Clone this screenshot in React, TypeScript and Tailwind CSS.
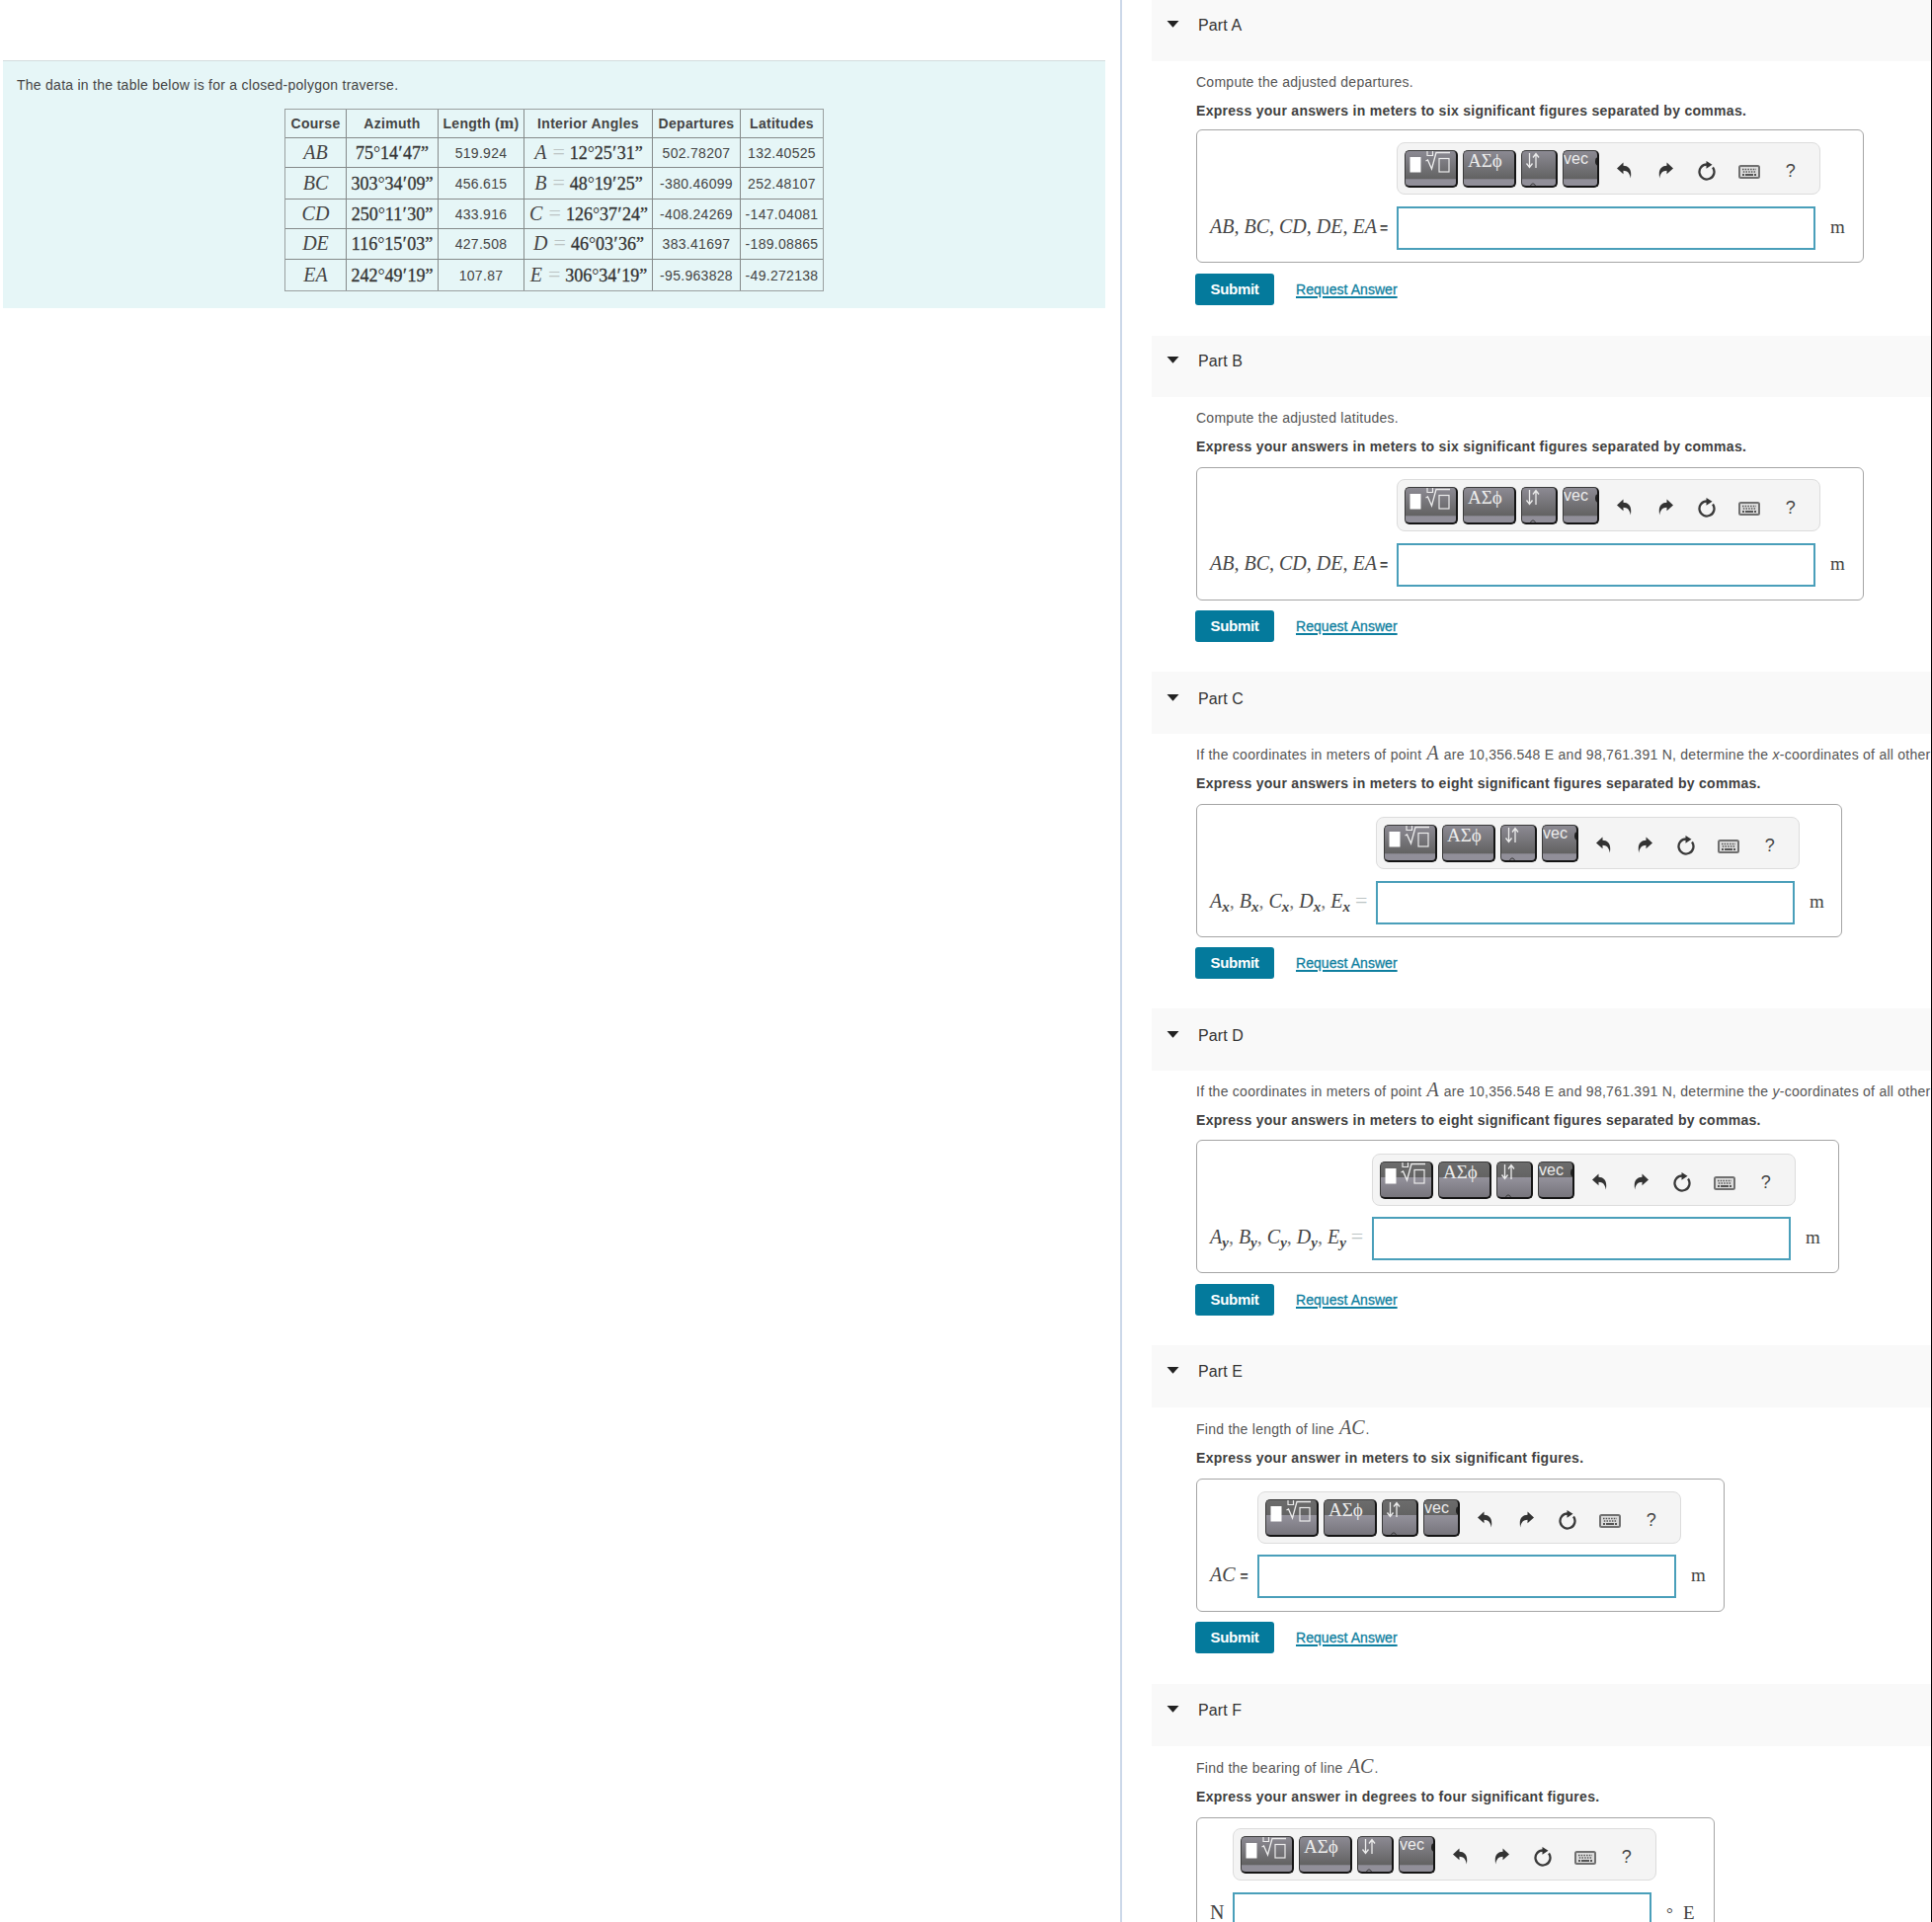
import type { ReactNode } from "react";

const rows = [
  { course: "AB", azimuth: ["75", "14", "47"], length: "519.924", angle: "A", value: ["12", "25", "31"], dep: "502.78207", lat: "132.40525", height: "h-[30px]" },
  { course: "BC", azimuth: ["303", "34", "09"], length: "456.615", angle: "B", value: ["48", "19", "25"], dep: "-380.46099", lat: "252.48107", height: "h-[32px]" },
  { course: "CD", azimuth: ["250", "11", "30"], length: "433.916", angle: "C", value: ["126", "37", "24"], dep: "-408.24269", lat: "-147.04081", height: "h-[30px]" },
  { course: "DE", azimuth: ["116", "15", "03"], length: "427.508", angle: "D", value: ["46", "03", "36"], dep: "383.41697", lat: "-189.08865", height: "h-[31px]" },
  { course: "EA", azimuth: ["242", "49", "19"], length: "107.87", angle: "E", value: ["306", "34", "19"], dep: "-95.963828", lat: "-49.272138", height: "h-[32px]" },
];

function Math({ children }: { children: ReactNode }) {
  return (
    <span className="mx-px font-['Liberation_Serif',serif] text-[20px] leading-none tracking-normal italic">
      {children}
    </span>
  );
}

function Dms({ value }: { value: string[] }) {
  return (
    <span className="font-['Liberation_Serif',serif] text-[18px] leading-none tracking-normal text-[#333] [-webkit-text-stroke:0.3px_#333]">
      {value[0]}
      <span className="inline-block w-[7px] text-center leading-none [-webkit-text-stroke:0px]">°</span>
      {value[1]}
      <span className="inline-block w-[5px]">′</span>
      {value[2]}”
    </span>
  );
}

function ThinEquals() {
  return (
    <span className="mx-[5px] font-['Liberation_Serif',serif] text-[22px] leading-none tracking-normal text-[#bcc4c4] not-italic">
      =
    </span>
  );
}

function DataTable() {
  const cell = "border border-[#858a8a] p-0";
  return (
    <table className="ml-[285px] w-[546px] table-fixed border-collapse text-center text-[14px] leading-none tracking-[0.3px] text-[#444] outline outline-1 -outline-offset-1 outline-[#9aa0a0]">
      <colgroup>
        <col className="w-[62px]" />
        <col className="w-[93px]" />
        <col className="w-[87px]" />
        <col className="w-[130px]" />
        <col className="w-[89px]" />
        <col className="w-[84px]" />
      </colgroup>
      <thead>
        <tr className="h-[29px] whitespace-nowrap">
          <th className={cell}>Course</th>
          <th className={cell}>Azimuth</th>
          <th className={cell}>
            <span className="relative -top-px">
              Length (<span className="font-['Liberation_Serif',serif] text-[17px] leading-none">m</span>)
            </span>
          </th>
          <th className={cell}>Interior Angles</th>
          <th className={cell}>Departures</th>
          <th className={cell}>Latitudes</th>
        </tr>
      </thead>
      <tbody>
        {rows.map((row) => (
          <tr key={row.course} className={`${row.height} whitespace-nowrap`}>
            <td className={`${cell} pb-[2px]`}>
              <Math>{row.course}</Math>
            </td>
            <td className={cell}>
              <Dms value={row.azimuth} />
            </td>
            <td className={cell}>{row.length}</td>
            <td className={`${cell} pb-[2px]`}>
              <Math>{row.angle}</Math>
              <ThinEquals />
              <Dms value={row.value} />
            </td>
            <td className={cell}>{row.dep}</td>
            <td className={cell}>{row.lat}</td>
          </tr>
        ))}
      </tbody>
    </table>
  );
}

function Subscripted({ sub }: { sub: string }) {
  return (
    <>
      {["A", "B", "C", "D", "E"].map((name, i) => (
        <span key={name}>
          {i > 0 && <span className="mr-[5px] text-[#777]">,</span>}
          {name}
          <span className="relative top-[4px] text-[15px] leading-none font-bold">{sub}</span>
        </span>
      ))}
      <ThinEquals />
    </>
  );
}

const glossy =
  "bg-[linear-gradient(180deg,#8c8a93_0%,#626262_80%,#918f99_82%,#918f99_100%)]";
const glossyLow =
  "bg-[linear-gradient(180deg,#6c6c6c_0%,#636363_42%,#93919b_44%,#77757c_100%)]";

function Toolbar({ low }: { low?: boolean }) {
  const button = `h-[38px] shrink-0 overflow-hidden rounded-[5px] border border-r-2 border-b-2 border-[#3a3a3a] border-r-[#151515] border-b-[#151515] text-[#ececec] ${low ? glossyLow : glossy}`;
  const slot = "flex w-[42.2px] shrink-0 items-center justify-center";
  return (
    <div className="flex h-[53px] w-[429px] items-center rounded-[8px] border border-[#dcdcdc] bg-[#f4f4f4] pl-[7px]">
      <div className="flex gap-[5px]">
        <div className={`w-[54px] ${button}`}>
          <svg width="50" height="34" viewBox="0 0 50 34" fill="none" stroke="#ececec">
            <rect x="4.5" y="6" width="11" height="15.500" fill="#fff" stroke="none" />
            <path d="M22 0v4.500h5.500V0" strokeWidth="1.200" />
            <path d="M20.500 10l2-1 4 9 4.500-16.500h14" strokeWidth="1.300" />
            <rect x="34" y="7.500" width="10" height="13.500" strokeWidth="1.200" />
          </svg>
        </div>
        <div className={`w-[54px] pl-1 font-['Liberation_Serif',serif] text-[19px] leading-[20px] ${button}`}>
          ΑΣϕ
        </div>
        <div className={`w-[37px] ${button}`}>
          <svg width="34" height="36" viewBox="0 0 34 36" fill="none" stroke="#ececec" strokeWidth="1.3">
            <path d="M7.500 2v14M4.500 12.500l3 4 3-4" />
            <path d="M14 17V3M11 6.500l3-4 3 4" />
            <path d="M8.500 36c0-4 5-4 5 0" stroke="#333" strokeWidth="1" />
          </svg>
        </div>
        <div className={`relative w-[37px] font-['Liberation_Sans',sans-serif] text-[16px] leading-[16px] ${button}`}>
          vec
          <span className="absolute top-[6px] -right-[2px] h-[9px] w-[4px] rounded-l-full bg-[#222]" />
        </div>
      </div>
      <div className="ml-[4px] flex flex-1 pt-1">
        <div className={slot}>
          <svg width="15" height="17" viewBox="0 0 15 17" fill="#333">
            <path d="M0 6.500L6.500.5v3.200C12 4 15.500 7.500 13.800 16.500 13 11 10.500 9 6.500 8.800v3.400z" />
          </svg>
        </div>
        <div className={slot}>
          <svg width="15" height="17" viewBox="0 0 15 17" fill="#333">
            <path d="M15 6.500L8.500.5v3.200C3 4-.5 7.500 1.200 16.500 2 11 4.500 9 8.500 8.800v3.400z" />
          </svg>
        </div>
        <div className={slot}>
          <svg width="20" height="20" viewBox="0 0 20 20" fill="none">
            <path d="M10 3.500a7.500 7.500 0 1 0 6 3" stroke="#3a3a3a" strokeWidth="2.300" />
            <path d="M9.500 0l6 3.800-6 4z" fill="#333" />
          </svg>
        </div>
        <div className={slot}>
          <svg width="22" height="14" viewBox="0 0 22 14" className="mt-[3px]">
            <rect x="1" y="1" width="20" height="12" rx="1.500" fill="#dcdcdc" stroke="#707070" strokeWidth="2" />
            <path d="M4 4.500h14M4.800 7h13" stroke="#555" strokeWidth="1.600" strokeDasharray="1.500 1.200" />
            <path d="M4 10h2M7 10h8M16 10h2" stroke="#555" strokeWidth="1.800" />
          </svg>
        </div>
        <div className={`${slot} text-[18px] leading-none text-[#444]`}>?</div>
      </div>
    </div>
  );
}

type Part = {
  name: string;
  section: string;
  header: string;
  prompt: ReactNode;
  promptClass: string;
  instruction: string;
  instructionClass: string;
  boxClass: string;
  label: ReactNode;
  labelClass: string;
  unit: ReactNode;
  unitClass: string;
  footClass: string;
  low?: boolean;
};

const courses = (
  <>
    AB, BC, CD, DE, EA
    <b className="ml-[3px] font-['Liberation_Sans',sans-serif] text-[14px] not-italic">=</b>
  </>
);

const parts: Part[] = [
  {
    name: "Part A",
    section: "h-[340px]",
    header: "h-[62px] pt-[1px]",
    prompt: "Compute the adjusted departures.",
    promptClass: "pt-[7px]",
    instruction: "Express your answers in meters to six significant figures separated by commas.",
    instructionClass: "h-[33px]",
    boxClass: "pb-3",
    label: courses,
    labelClass: "w-[189px]",
    unit: "m",
    unitClass: "w-12",
    footClass: "pt-[11px]",
  },
  {
    name: "Part B",
    section: "h-[340px]",
    header: "h-[62px] pt-[1px]",
    prompt: "Compute the adjusted latitudes.",
    promptClass: "pt-[7px]",
    instruction: "Express your answers in meters to six significant figures separated by commas.",
    instructionClass: "h-[35px]",
    boxClass: "pb-[13px]",
    label: courses,
    labelClass: "w-[189px]",
    unit: "m",
    unitClass: "w-12",
    footClass: "pt-[10px]",
  },
  {
    name: "Part C",
    section: "h-[341px]",
    header: "h-[63px] pt-[4px]",
    prompt: (
      <>
        If the coordinates in meters of point <Math>A</Math> are 10,356.548 E and 98,761.391 N,
        determine the <i>x</i>-coordinates of all other
      </>
    ),
    promptClass: "pt-[7px]",
    instruction: "Express your answers in meters to eight significant figures separated by commas.",
    instructionClass: "h-[35px]",
    boxClass: "pb-3",
    label: <Subscripted sub="x" />,
    labelClass: "w-[168px]",
    unit: "m",
    unitClass: "w-[47px]",
    footClass: "pt-[10px]",
  },
  {
    name: "Part D",
    section: "h-[341px]",
    header: "h-[63px] pt-[4px]",
    prompt: (
      <>
        If the coordinates in meters of point <Math>A</Math> are 10,356.548 E and 98,761.391 N,
        determine the <i>y</i>-coordinates of all other
      </>
    ),
    promptClass: "pt-[7px]",
    instruction: "Express your answers in meters to eight significant figures separated by commas.",
    instructionClass: "h-[34px]",
    boxClass: "pb-3",
    label: <Subscripted sub="y" />,
    labelClass: "w-[164px]",
    unit: "m",
    unitClass: "w-12",
    footClass: "pt-[11px]",
    low: true,
  },
  {
    name: "Part E",
    section: "h-[343px]",
    header: "h-[63px] pt-[3px]",
    prompt: (
      <>
        Find the length of line <Math>AC</Math>.
      </>
    ),
    promptClass: "pt-2",
    instruction: "Express your answer in meters to six significant figures.",
    instructionClass: "h-[35px]",
    boxClass: "pb-[13px]",
    label: (
      <>
        AC<b className="ml-[5px] font-['Liberation_Sans',sans-serif] text-[14px] not-italic">=</b>
      </>
    ),
    labelClass: "w-[48px]",
    unit: "m",
    unitClass: "w-12",
    footClass: "pt-[10px]",
    low: true,
  },
  {
    name: "Part F",
    section: "h-[341px]",
    header: "h-[63px] pt-[3px]",
    prompt: (
      <>
        Find the bearing of line <Math>AC</Math>.
      </>
    ),
    promptClass: "pt-2",
    instruction: "Express your answer in degrees to four significant figures.",
    instructionClass: "h-[35px]",
    boxClass: "pb-[14px]",
    label: <span className="not-italic">N</span>,
    labelClass: "w-[23px]",
    unit: (
      <>
        <span className="mr-[10px] inline-block w-[7px] text-[17px]">°</span>E
      </>
    ),
    unitClass: "w-[63px]",
    footClass: "pt-3",
  },
];

function PartSection({ part }: { part: Part }) {
  return (
    <section className={`shrink-0 overflow-hidden ${part.section}`}>
      <div className={`flex items-center bg-[#f9f9f9] pl-[15px] ${part.header}`}>
        <svg width="13" height="7" viewBox="0 0 13 7" className="mb-[15px]">
          <path d="M.5 0h12l-6 6.800z" fill="#222" />
        </svg>
        <h2 className="mb-[12px] ml-[19px] text-[16px] leading-none tracking-[0.1px] text-[#333]">{part.name}</h2>
      </div>
      <div className="pl-[45px]">
        <p className={`text-[14px] leading-[29px] tracking-[0.26px] whitespace-nowrap text-[#555] ${part.promptClass}`}>
          {part.prompt}
        </p>
        <p className={`text-[14px] leading-[29px] font-bold tracking-[0.29px] whitespace-nowrap text-[#404040] ${part.instructionClass}`}>
          {part.instruction}
        </p>
        <div className={`flex h-[135px] w-fit items-end rounded-[6px] border border-[#a5a5a5] pl-[13px] ${part.boxClass}`}>
          <div className={`h-[44px] font-['Liberation_Serif',serif] text-[20px] leading-[40px] whitespace-nowrap text-[#444] italic ${part.labelClass}`}>
            {part.label}
          </div>
          <div className={`flex w-[424px] flex-col ${part.low ? "gap-[11px]" : "gap-[12px]"}`}>
            <Toolbar low={part.low} />
            <div className="h-[44px] border-2 border-[#4a9fba] bg-white" />
          </div>
          <div className={`h-[44px] pl-[15px] font-['Liberation_Serif',serif] text-[19px] leading-[41px] whitespace-nowrap text-[#444] ${part.unitClass}`}>
            {part.unit}
          </div>
        </div>
        <div className={`-ml-px flex items-center ${part.footClass}`}>
          <button className="h-[32px] w-[80px] rounded-[3px] bg-[#047a9c] pb-px text-[15px] leading-none font-bold tracking-[-0.3px] text-white">
            Submit
          </button>
          <a className="ml-[22px] text-[14px] leading-none tracking-[0.05px] text-[#0f7fa0] underline decoration-[1.5px] underline-offset-[2px] [-webkit-text-stroke:0.3px_#0f7fa0]">
            Request Answer
          </a>
        </div>
      </div>
    </section>
  );
}

export default function App() {
  return (
    <div className="flex h-[1946px] w-[1956px] overflow-hidden bg-white font-['Liberation_Sans',Arial,sans-serif]">
      <div className="w-[1134px] shrink-0 pt-[61px] pl-[3px]">
        <div className="h-[251px] w-[1116px] border-t border-[#d3dcdd] bg-[#e6f6f7]">
          <p className="h-[48px] pt-[10px] pl-[14px] text-[14px] leading-[29px] tracking-[0.26px] text-[#444]">
            The data in the table below is for a closed-polygon traverse.
          </p>
          <DataTable />
        </div>
      </div>
      <div className="w-[2px] shrink-0 bg-[#ccd8e9]" />
      <main className="ml-[30px] flex w-[790px] flex-col overflow-hidden border-r border-black">
        {parts.map((part) => (
          <PartSection key={part.name} part={part} />
        ))}
      </main>
    </div>
  );
}
